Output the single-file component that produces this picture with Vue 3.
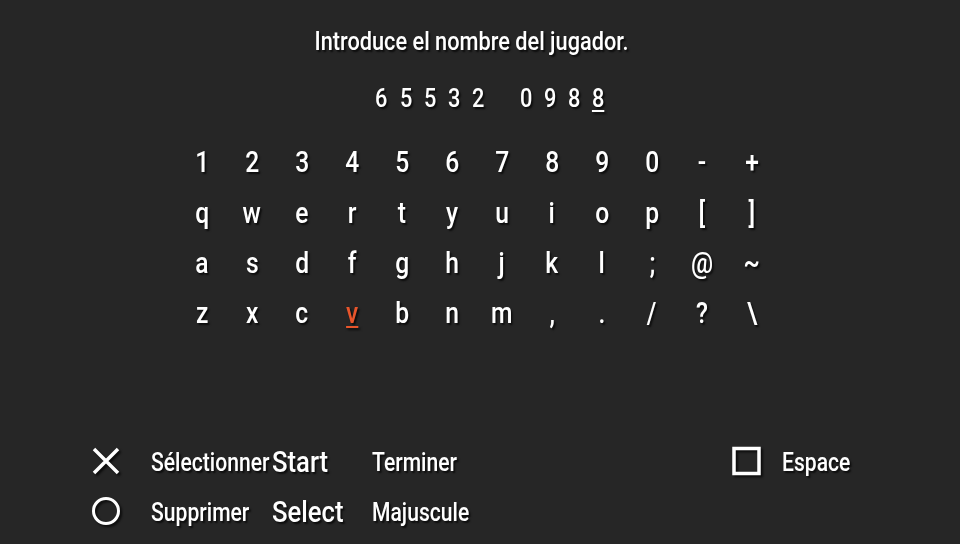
<script setup>
const keyRows = [
  ['1', '2', '3', '4', '5', '6', '7', '8', '9', '0', '-', '+'],
  ['q', 'w', 'e', 'r', 't', 'y', 'u', 'i', 'o', 'p', '[', ']'],
  ['a', 's', 'd', 'f', 'g', 'h', 'j', 'k', 'l', ';', '@', '~'],
  ['z', 'x', 'c', 'v', 'b', 'n', 'm', ',', '.', '/', '?', '\\'],
]
const nameChars = ['6', '5', '5', '3', '2', ' ', '0', '9', '8', '8']
</script>

<template>
  <div class="screen">
    <div class="title"><span class="squeeze">Introduce el nombre del jugador.</span></div>

    <div class="name">
      <span
        v-for="(c, i) in nameChars"
        :key="i"
        class="name-char"
        :class="{ cursor: i === nameChars.length - 1 }"
      ><span class="squeeze">{{ c }}</span></span>
    </div>

    <div class="keyboard">
      <template v-for="row in keyRows">
        <span
          v-for="k in row"
          :key="k"
          class="key"
          :class="{ active: k === 'v' }"
        ><span class="squeeze">{{ k }}</span></span>
      </template>
    </div>

    <div class="footer">
      <svg class="icon" viewBox="0 0 30 30">
        <path d="M3 3 L27 27 M27 3 L3 27" fill="none" stroke="#fff" stroke-width="3.5" />
      </svg>
      <span class="label action"><span class="squeeze left">Sélectionner</span></span>
      <span class="label big"><span class="squeeze left">Start</span></span>
      <span class="label"><span class="squeeze left">Terminer</span></span>
      <svg class="icon" viewBox="0 0 30 30">
        <rect x="3" y="2.5" width="25" height="25" fill="none" stroke="#fff" stroke-width="3.5" />
      </svg>
      <span class="label extra"><span class="squeeze left">Espace</span></span>

      <svg class="icon" viewBox="0 0 30 30">
        <circle cx="15" cy="15" r="12.5" fill="none" stroke="#fff" stroke-width="3" />
      </svg>
      <span class="label action"><span class="squeeze left">Supprimer</span></span>
      <span class="label big"><span class="squeeze left">Select</span></span>
      <span class="label"><span class="squeeze left">Majuscule</span></span>
    </div>
  </div>
</template>

<style scoped>
.screen {
  width: 960px;
  height: 544px;
  box-sizing: border-box;
  overflow: hidden;
  background: #262626;
  color: #fff;
  font-family: Roboto, sans-serif;
  font-weight: 500;
  text-shadow: 2px 2px 2px rgba(0, 0, 0, 0.7);
  padding-top: 25px;
}

.squeeze {
  display: inline-block;
  transform: scaleX(0.87);
  white-space: pre;
}

.squeeze.left {
  transform-origin: left center;
}

.title {
  width: 944px;
  height: 34px;
  line-height: 34px;
  font-size: 25px;
  text-align: center;
}

.name {
  display: flex;
  margin: 23px 0 0 369.5px;
  height: 34px;
  line-height: 34px;
  font-size: 25px;
}

.name-char {
  width: 24.1px;
  text-align: center;
}

.name-char.cursor .squeeze {
  text-decoration: underline;
  text-underline-offset: 3px;
}

.keyboard {
  display: grid;
  grid-template-columns: repeat(12, 50px);
  grid-template-rows: 51px 50px 50px 50px;
  margin: 21px 0 0 177px;
  font-size: 29px;
  line-height: 50px;
  text-align: center;
}

.key .squeeze {
  transform: scaleX(0.85);
}

.key.active .squeeze {
  color: #e8552b;
  text-decoration: underline;
  text-decoration-thickness: 2px;
  text-underline-offset: 3px;
}

.footer {
  display: grid;
  grid-template-columns: 30px 151px 100px 359px 30px auto;
  grid-template-rows: 50px 50px;
  align-items: center;
  margin: 98px 0 0 91px;
  font-size: 25px;
}

.footer .icon {
  width: 30px;
  height: 30px;
  filter: drop-shadow(2px 2px 1px rgba(0, 0, 0, 0.7));
}

.footer .label {
  padding-top: 3px;
  white-space: nowrap;
}

.footer .label .squeeze {
  transform: scaleX(0.845);
}

.footer .label.action {
  margin-left: 30px;
}

.footer .label.extra {
  margin-left: 21px;
}

.footer .label.big {
  padding-top: 1px;
  font-size: 30px;
}

.footer .label.big .squeeze {
  transform: scaleX(0.855);
}
</style>
